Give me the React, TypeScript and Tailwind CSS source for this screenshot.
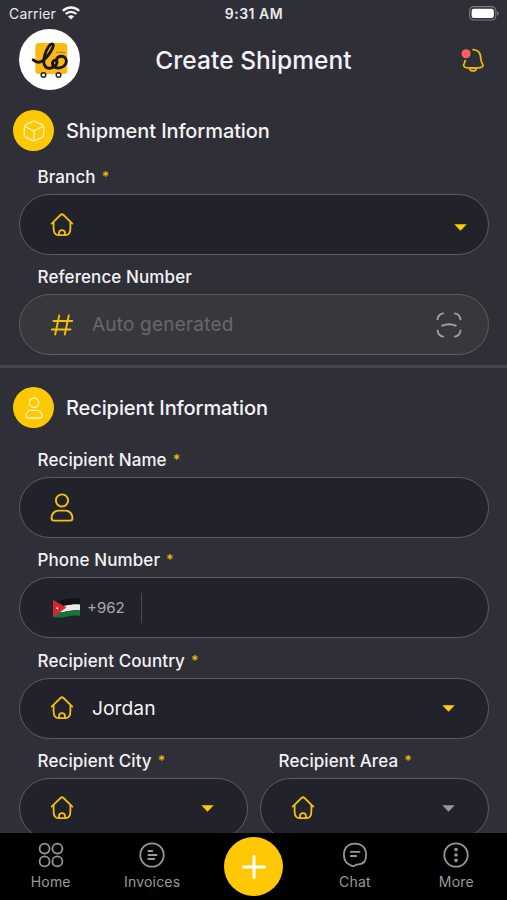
import type { ReactNode } from "react";

function HomeIcon() {
  return (
    <svg width="24" height="24" viewBox="0 0 24 24" fill="none" stroke="#f3c010" strokeWidth="1.800" strokeLinecap="round" strokeLinejoin="round">
      <path d="M1.700 10.600 10.500 2q1.500-1.400 3 0l8.800 8.600" />
      <path d="M3.600 9.400V15c0 4.600 1.600 7.200 5 7.200h6.800c3.400 0 5-2.600 5-7.200V9.400" />
      <path d="M9 22v-1.800a3 3 0 0 1 6 0V22" />
    </svg>
  );
}

function PersonIcon({ className, color, stroke }: { className: string; color: string; stroke: number }) {
  return (
    <svg className={className} viewBox="0 0 24 30" fill="none" stroke={color} strokeWidth={stroke} strokeLinejoin="round">
      <circle cx="12" cy="7.700" r="6.300" />
      <path d="M3.600 28.600h16.800q2.400 0 2.400-2.400c0-4.700-3-8-7.200-8H8.400c-4.200 0-7.200 3.300-7.200 8q0 2.400 2.400 2.400Z" />
    </svg>
  );
}

function HashIcon() {
  return (
    <svg width="24" height="24" viewBox="0 0 24 24" fill="none" stroke="#f3c010" strokeWidth="1.900" strokeLinecap="round">
      <path d="M9.200 2.500 5.200 21.500M18.800 2.500l-4 19M3.500 8h18.700M1.800 16.500h18.700" />
    </svg>
  );
}

function ScanIcon() {
  return (
    <svg width="26" height="26" viewBox="0 0 26 26" fill="none" stroke="#a1a1a4" strokeWidth="1.900" strokeLinecap="round">
      <path d="M1.500 7.300c.4-3.300 2.300-5.300 5.600-5.900M18.900 1.400c3.300.6 5.200 2.600 5.600 5.900M24.500 18.700c-.4 3.300-2.300 5.300-5.600 5.900M7.100 24.600c-3.300-.6-5.200-2.600-5.600-5.900M6.200 13.700q6.800-3 13.600 0" />
    </svg>
  );
}

function Caret({ color = "#ffcb05" }: { color?: string }) {
  return (
    <svg width="13" height="7" viewBox="0 0 13 7" fill={color}>
      <path d="M.3.300h12.400L6.500 6.700Z" />
    </svg>
  );
}

function Flag() {
  return (
    <svg width="29" height="20" viewBox="0 0 29 20">
      <path d="M1 1.500C6 4 10 2 14 1S23 0 28 .7V6.500c-5-.8-9 0-14 1S6 9 1 7.500Z" fill="#111214" />
      <path d="M1 7.500c5 1.500 8 1 13 0s9-1.800 14-1v6c-5-.8-9 0-14 1s-8 1.500-13 0Z" fill="#e9e9ea" />
      <path d="M1 13.500c5 1.500 8 1 13 0s9-1.800 14-1v5.500c-5-1-9-.3-14 .700s-8 1.300-13 .300Z" fill="#17733c" />
      <path d="M1 1.800 14.500 9.600 1 19Z" fill="#d3263a" />
      <circle cx="5.300" cy="10.300" r="1" fill="#fff" />
    </svg>
  );
}

function Logo() {
  return (
    <div className="flex size-[61px] items-center justify-center rounded-full bg-white">
      <svg width="44" height="44" viewBox="0 0 44 44" fill="none" strokeLinecap="round" strokeLinejoin="round">
        <rect x="7.300" y="5" width="32" height="31" rx="3.500" fill="#fdb913" />
        <path d="M5.200 21.800c3 2.600 7 3.100 10.300.4C20.500 18 24.800 11 25.300 7.800c.3-2.500-2.600-2.300-4.300.2-3 4.600-5.300 11-5.200 16.300.1 4 2.800 6.300 6.200 5.900 4-.5 7-3.400 7-6 0-2.200-2.800-2.600-4-.7-1.700 3 .9 6.500 5.200 6.500 4.800 0 8.200-3 8.200-6.900 0-3.300-2.600-5.200-5.600-4.800-2.400.3-4 1.900-4.400 3.900" stroke="#181713" strokeWidth="2.900" />
        <path d="M28.500 14.600h1.200l.8-1 .8 1h1.500l.7-1.300.8 1.300h3" stroke="#8a6a12" strokeWidth=".8" />
        <circle cx="15.500" cy="37" r="2.300" fill="#fff" stroke="#222" strokeWidth="1.500" />
        <circle cx="30.500" cy="37" r="2.300" fill="#fff" stroke="#222" strokeWidth="1.500" />
      </svg>
    </div>
  );
}

function StatusBar() {
  return (
    <div className="grid h-7 grid-cols-3 items-center pl-[9px] pr-[8px] text-[14px] leading-none text-[#e9e9eb]">
      <div className="flex items-center gap-[6px]">
        <span className="tracking-[0.150px]">Carrier</span>
        <svg className="-mt-[2px]" width="18" height="14" viewBox="0 0 18 14" fill="none" stroke="#f3f3f5" strokeWidth="2.400">
          <path d="M.9 4.900c4.600-4.500 11.600-4.500 16.200 0M3.700 8c3-2.900 7.600-2.900 10.600 0" />
          <path d="M9 13.600 5.900 10.400c1.800-1.600 4.400-1.600 6.200 0Z" fill="#f3f3f5" stroke="none" />
        </svg>
      </div>
      <span className="whitespace-nowrap text-center font-semibold tracking-[0.500px]">9:31 AM</span>
      <svg className="-mt-[2px] justify-self-end" width="30" height="15" viewBox="0 0 31 15" preserveAspectRatio="none">
        <rect x=".7" y=".7" width="27" height="13.300" rx="4" fill="none" stroke="#7b7b80" strokeWidth="1.200" />
        <rect x="2.700" y="2.700" width="23" height="9.300" rx="2.300" fill="#fff" />
        <path d="M29 5.200q1.700.6 1.700 2.200T29 9.600Z" fill="#7b7b80" />
      </svg>
    </div>
  );
}

function Header() {
  return (
    <header className="grid h-[72px] grid-cols-[61px_1fr_61px] items-start pl-[19px] pr-[22px] pt-[1px]">
      <Logo />
      <h1 className="self-start whitespace-nowrap pl-[3px] pt-[14px] text-center text-[24.500px] font-medium leading-[34px] tracking-[0.050px] text-[#f3f3f6]">Create Shipment</h1>
      <svg className="mt-[18px] justify-self-end" width="25" height="27" viewBox="0 0 26 27" fill="none" stroke="#e5b90e" strokeWidth="1.900" strokeLinecap="round" strokeLinejoin="round">
        <path d="M13.600 2.200c4.600.2 7.500 3.400 7.900 7.800.2 3.400.2 4.800 1.500 6.400 1.700 2.400.7 4.200-2 4.500q-7.300.8-14.400 0c-2.700-.4-3.600-2.300-2.100-4.500l.9-2.800" />
        <path d="M9.700 21.300c.8 4.100 6.800 4.100 7.600 0" />
        <circle cx="6.300" cy="6.500" r="4.700" fill="#ff5d64" stroke="none" />
      </svg>
    </header>
  );
}

function SectionTitle({ icon, title }: { icon: ReactNode; title: string }) {
  return (
    <div className="flex items-center gap-3 pl-[13px]">
      <div className="flex size-[41px] items-center justify-center rounded-full bg-[#ffc805]">{icon}</div>
      <h2 className="text-[20px] font-medium leading-none tracking-[-0.100px] text-[#f3f3f6]">{title}</h2>
    </div>
  );
}

function Field({ label, required = true, disabled = false, children }: { label: string; required?: boolean; disabled?: boolean; children?: ReactNode }) {
  return (
    <div className="min-w-0 flex-1">
      <div className="flex h-[33px] items-center gap-[6px] pl-[18.500px] text-[17px] font-medium leading-none tracking-[0.100px] text-[#f3f3f6]">
        <span className="whitespace-nowrap">{label}</span>
        {required && <span className="-mt-[1px] text-[14px] font-semibold text-[#e9ba0c]">*</span>}
      </div>
      <div className={`flex h-[61px] items-center rounded-full border pl-[30px] ${disabled ? "border-[#5c5c61] bg-[#38383c]" : "border-[#5c5c61] bg-[#22222a]"}`}>{children}</div>
    </div>
  );
}

function NavItem({ label, children }: { label: string; children: ReactNode }) {
  return (
    <div className="flex flex-1 flex-col items-center pt-[9px] text-[#98989a]">
      <svg width="26" height="26" viewBox="0 0 26 26" fill="none" stroke="currentColor" strokeWidth="1.800" strokeLinecap="round" strokeLinejoin="round">{children}</svg>
      <span className="mt-[5px] text-[14px] leading-[18px] tracking-[0.200px]">{label}</span>
    </div>
  );
}

export default function App() {
  return (
    <div className="flex h-[900px] w-[507px] flex-col overflow-hidden bg-[#2f2f38] font-['Inter','Liberation_Sans',sans-serif]">
      <StatusBar />
      <Header />
      <main className="min-h-0 flex-1 overflow-hidden">
        <div className="h-[61px] pt-[10px]">
          <SectionTitle
            title="Shipment Information"
            icon={
              <svg width="22" height="22" viewBox="0 0 22 22" fill="none" stroke="#fff6c8" strokeWidth="1.300" strokeLinejoin="round" strokeLinecap="round">
                <path d="M9.300 1.600q1.700-.8 3.400 0l6.200 3.100q1.800 1 1.800 3v6.600q0 2-1.800 3l-6.200 3.100q-1.700.8-3.400 0l-6.200-3.100q-1.800-1-1.800-3V7.700q0-2 1.800-3ZM2 6.500l9 4.500 9-4.500M11 11v9.500" />
              </svg>
            }
          />
        </div>
        <div className="flex flex-col gap-[6px] pl-[19px] pr-[18px]">
          <Field label="Branch">
            <HomeIcon />
            <div className="ml-auto mr-[21px] mt-[5px]"><Caret /></div>
          </Field>
          <Field label="Reference Number" required={false} disabled>
            <HashIcon />
            <span className="ml-[18px] mt-[2px] text-[19px] tracking-[0.200px] text-[#67676c]">Auto generated</span>
            <div className="ml-auto mr-[26px]"><ScanIcon /></div>
          </Field>
        </div>
        <div className="mt-[10px] h-[3px] bg-[#45454b]" />
        <div className="h-[76px] pt-[19px]">
          <SectionTitle title="Recipient Information" icon={<PersonIcon className="h-[22px] w-[18px]" color="#fff6c8" stroke={1.800} />} />
        </div>
        <div className="flex flex-col gap-[6.300px] pl-[19px] pr-[18px]">
          <Field label="Recipient Name">
            <PersonIcon className="h-[29px] w-[24px]" color="#f3c010" stroke={2} />
          </Field>
          <Field label="Phone Number">
            <div className="ml-[2px]"><Flag /></div>
            <span className="ml-[6px] text-[15px] text-[#a9a9ad]">+962</span>
            <div className="ml-[16px] h-[30px] w-px bg-[#48484e]" />
          </Field>
          <Field label="Recipient Country">
            <HomeIcon />
            <span className="ml-[18px] mt-[1px] text-[19.300px] text-[#f3f3f6]">Jordan</span>
            <div className="ml-auto mr-[33px]"><Caret /></div>
          </Field>
          <div className="flex gap-[12px]">
            <Field label="Recipient City">
              <HomeIcon />
              <div className="ml-auto mr-[33px]"><Caret /></div>
            </Field>
            <Field label="Recipient Area">
              <HomeIcon />
              <div className="ml-auto mr-[33px]"><Caret color="#98989b" /></div>
            </Field>
          </div>
        </div>
      </main>
      <nav className="flex h-[67px] shrink-0 bg-black">
        <NavItem label="Home">
          <circle cx="6.600" cy="6.600" r="5" /><circle cx="19.400" cy="6.600" r="5" />
          <circle cx="6.600" cy="19.400" r="5" /><circle cx="19.400" cy="19.400" r="5" />
        </NavItem>
        <NavItem label="Invoices">
          <circle cx="13" cy="13" r="11.700" />
          <path d="M9.300 9h4M9.300 13h8.200M9.300 17h6" />
        </NavItem>
        <div className="flex flex-1 justify-center pt-1">
          <div className="flex size-[59px] items-center justify-center rounded-full bg-[#ffc805]">
            <svg width="26" height="26" viewBox="0 0 26 26" stroke="#fff" strokeWidth="3" strokeLinecap="round"><path d="M13 2.500v21M2.500 13h21" /></svg>
          </div>
        </div>
        <NavItem label="Chat">
          <path d="M8.500 23.200C4.300 21.500 1.900 17.800 1.900 13 1.900 6 6.200 1.600 13 1.600S24.100 6 24.100 13c0 6-2.600 9.200-7.600 9.400-1.800.1-2.500.3-3.400 1-1.400 1.300-2.800 1-4.600-.2Z" />
          <path d="M8.800 9.800h8.800M8.800 14h5.400" />
        </NavItem>
        <NavItem label="More">
          <circle cx="13" cy="13" r="11.700" />
          <g fill="currentColor" stroke="none"><circle cx="13" cy="7.600" r="1.800" /><circle cx="13" cy="13" r="1.800" /><circle cx="13" cy="18.400" r="1.800" /></g>
        </NavItem>
      </nav>
    </div>
  );
}
